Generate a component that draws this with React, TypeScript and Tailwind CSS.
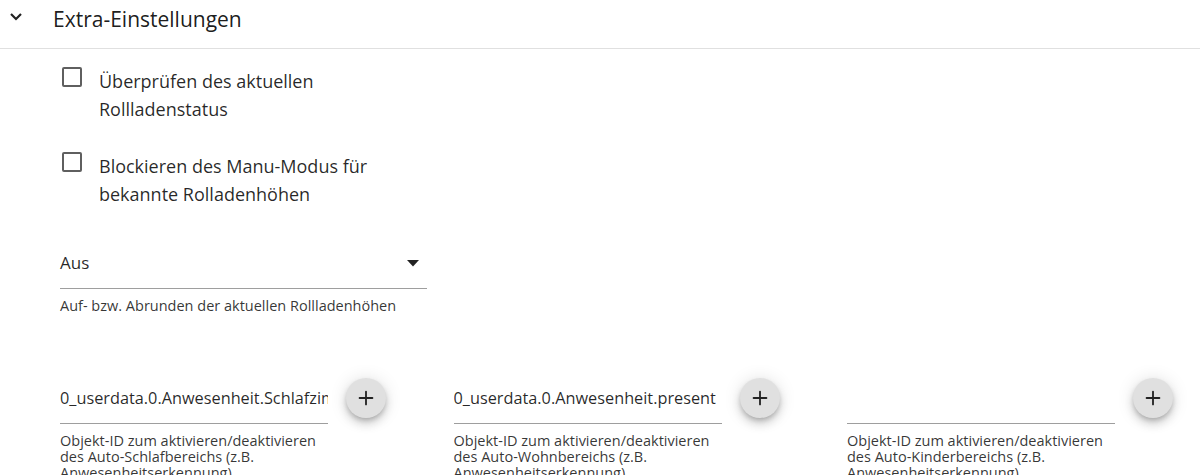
import { Plus } from "lucide-react"

const font = { fontFamily: '"Open Sans", "Noto Sans", sans-serif' }

type CheckRowProps = { label: string[] }

function CheckRow({ label }: CheckRowProps) {
  return (
    <label className="flex items-start gap-[17px] pl-[62px]">
      <span className="mt-0 block h-5 w-5 flex-none rounded-[2px] border-2 border-[#5f5f5f]" />
      <span className="text-[18px] leading-[28px] text-black/85">
        {label.map((line) => (
          <span key={line} className="block">
            {line}
          </span>
        ))}
      </span>
    </label>
  )
}

type ObjectFieldProps = {
  value: string
  area: string
}

function ObjectField({ value, area }: ObjectFieldProps) {
  return (
    <div className="w-[393.5px] flex-none">
      <div className="flex items-start">
        <div className="w-[268px] border-b border-[#9e9e9e] pb-[12px] pt-[7px]">
          <div className="h-[26px] overflow-hidden whitespace-nowrap text-[16.3px] leading-[26px] text-black/85">
            {value}
          </div>
        </div>
        <button className="ml-[18px] flex h-10 w-10 items-center justify-center rounded-full bg-[#e0e0e0] text-[#222] shadow-[0_3px_5px_-1px_rgba(0,0,0,0.2),0_6px_10px_0_rgba(0,0,0,0.14),0_1px_18px_0_rgba(0,0,0,0.12)]">
          <Plus size={22} strokeWidth={2} />
        </button>
      </div>
      <p className="mt-[9px] w-[268px] text-[14.5px] leading-[16px] text-black/80">
        Objekt-ID zum aktivieren/deaktivieren des Auto-{area} (z.B. Anwesenheitserkennung)
      </p>
    </div>
  )
}

export default function App() {
  return (
    <div className="h-[475px] w-[1200px] overflow-hidden bg-white" style={font}>
      {/* Panel header */}
      <div className="flex h-[49px] items-start border-b border-[#e0e0e0]">
        <svg className="ml-[10px] mt-[13px] h-[8px] w-[12px] text-[#222]" viewBox="0 0 12 8" fill="none">
          <path d="M1 1 6 6 11 1" stroke="currentColor" strokeWidth="2.2" />
        </svg>
        <span className="ml-[31px] pt-[5px] text-[21px] leading-[28px] text-black/90">Extra-Einstellungen</span>
      </div>

      <div className="pt-[18px]">
        <CheckRow label={["Überprüfen des aktuellen", "Rollladenstatus"]} />
        <div className="mt-[29px]">
          <CheckRow label={["Blockieren des Manu-Modus für", "bekannte Rolladenhöhen"]} />
        </div>

        {/* Rounding select */}
        <div className="ml-[60px] mt-[42px] w-[367px]">
          <div className="flex items-center justify-between border-b border-[#9e9e9e] pb-[12px]">
            <span className="text-[17px] leading-[26px] text-black/85">Aus</span>
            <svg className="mr-[8px] h-[7px] w-[12px] text-[#222]" viewBox="0 0 12 7">
              <path d="M0 0h12L6 6.5z" fill="currentColor" />
            </svg>
          </div>
          <p className="mt-[9px] whitespace-nowrap text-[14.5px] leading-[16px] text-black/80">
            Auf- bzw. Abrunden der aktuellen Rollladenhöhen
          </p>
        </div>

        <div className="mt-[64px] flex pl-[60px]">
          <ObjectField value="0_userdata.0.Anwesenheit.Schlafzimmer" area="Schlafbereichs" />
          <ObjectField value="0_userdata.0.Anwesenheit.present" area="Wohnbereichs" />
          <ObjectField value="" area="Kinderbereichs" />
        </div>
      </div>
    </div>
  )
}
